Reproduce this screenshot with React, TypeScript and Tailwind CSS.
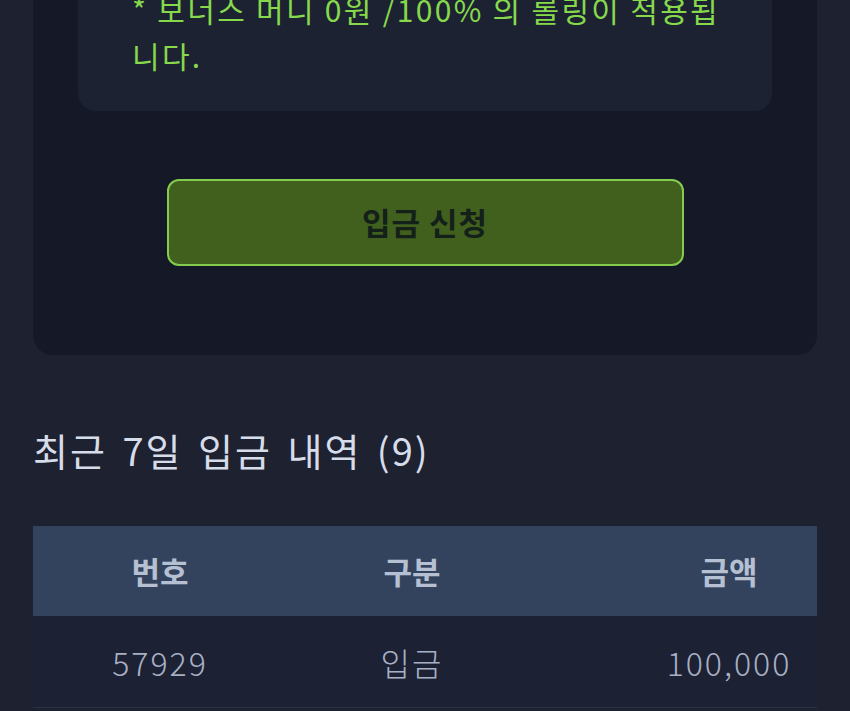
import React from "react";

const rows = [{ id: "57929", kind: "입금", amount: "100,000" }];

export default function App() {
  return (
    <div
      className="min-h-screen overflow-hidden bg-[#1e2130] px-[33px]"
      style={{ fontFamily: '"Noto Sans CJK KR", "Noto Sans", sans-serif' }}
    >
      {/* Deposit form card (scrolled, top cut off) */}
      <div className="-mt-[60px] rounded-[20px] bg-[#151927] px-[45px] pt-[24px] pb-[89px]">
        <div className="rounded-[18px] bg-[#1d2233] pl-[54px] pr-[40px] pt-[22px] pb-[33px]">
          <p className="whitespace-nowrap text-[30px] leading-[46px] tracking-[2.3px] text-[#86d94a]">
            * 보너스 머니 0원 /100% 의 롤링이 적용됩
            <br />
            니다.
          </p>
        </div>
        <button className="mx-auto mt-[68px] flex h-[87px] w-[517px] items-center justify-center rounded-[12px] border-2 border-[#84cc50] bg-[#41601e] text-[31px] font-bold tracking-[1px] text-[#14201a]">
          입금 신청
        </button>
      </div>

      {/* Recent history */}
      <h2 className="mt-[70px] text-[38px] font-normal leading-[50px] tracking-[2px] text-[#d6dcea] [word-spacing:5px]">
        최근 7일 입금 내역 (9)
      </h2>

      <div className="mt-[51px]">
        <div className="grid h-[90px] grid-cols-[254px_250px_1fr] items-center bg-[#34435d] text-[31px] font-bold text-[#b6c0d3]">
          <div className="text-center">번호</div>
          <div className="text-center">구분</div>
          <div className="pl-[104px] text-center">금액</div>
        </div>
        {rows.map((r) => (
          <div
            key={r.id}
            className="grid h-[92px] grid-cols-[254px_250px_1fr] items-center border-b border-[#2a3045] bg-[#1c2134] text-[32px] font-light tracking-[2px] text-[#a8b0c4]"
          >
            <div className="text-center">{r.id}</div>
            <div className="text-center">{r.kind}</div>
            <div className="pl-[104px] text-center">{r.amount}</div>
          </div>
        ))}
      </div>
    </div>
  );
}
